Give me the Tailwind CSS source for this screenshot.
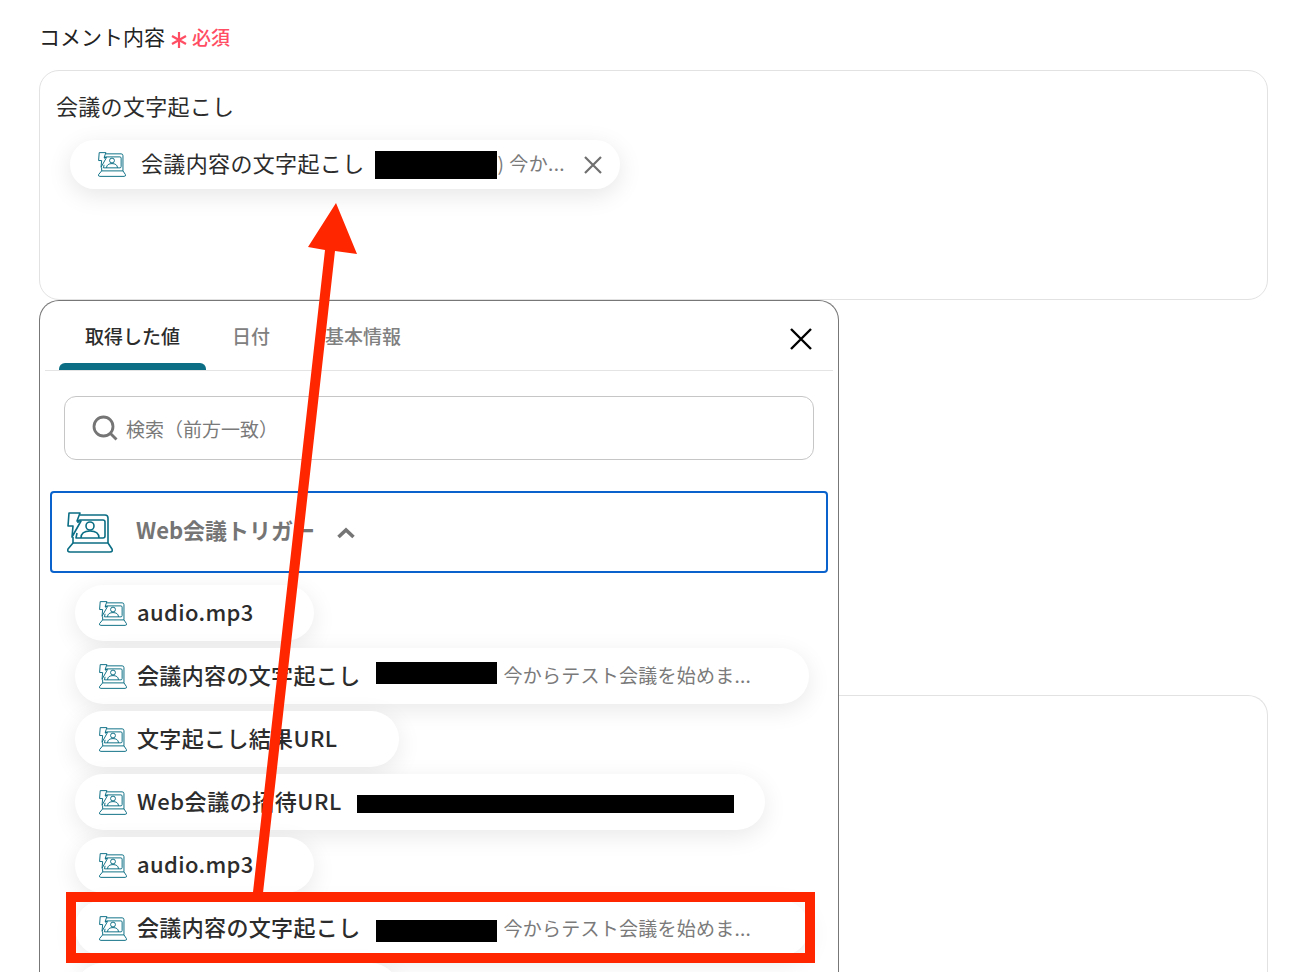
<!DOCTYPE html>
<html lang="ja">
  <head>
    <meta charset="UTF-8" />
    <meta name="viewport" content="width=device-width, initial-scale=1.0" />
    <script src="https://cdn.jsdelivr.net/npm/@tailwindcss/browser@4"></script>
    <title>コメント内容</title>
  </head>
  <body class="relative h-[972px] overflow-hidden bg-white font-['Noto_Sans_CJK_JP','Noto_Sans',sans-serif] text-[#2c2c2c]">
    <svg class="hidden">
      <symbol id="meeting" viewBox="0 0 46 41">
        <g fill="none" stroke="#0b6e84" stroke-width="1.6" stroke-linejoin="round">
          <path d="M2 1h11l-3 8h4L5 25l1-11H1z" />
          <path d="M13 3h25q3 0 3 3v25H6v-6" />
          <path d="M11 11v-1q0-2 2-2h23q2 0 2 2v14q0 2-2 2H9l1-5" />
          <circle cx="23" cy="14" r="4" />
          <path d="M14 26c0-5 4-7 9-7s9 2 9 7" />
          <path d="M6 31 1 37q-1 3 2 3h40q3 0 2-3l-4-6" />
        </g>
      </symbol>
    </svg>

    <div class="px-[39px] pt-[18px]">
      <div class="flex h-[36px] items-center">
        <span class="text-[21px] leading-none text-[#222222]">コメント内容</span>
        <svg class="ml-[6px] mt-[8px] h-[16px] w-[16px]" viewBox="0 0 16 16">
          <path d="M8 0v16M1 4l14 8M15 4 1 12" stroke="#ff4d63" stroke-width="2.2" />
        </svg>
        <span class="ml-[5px] text-[19px] font-medium leading-none text-[#ff4d63]">必須</span>
      </div>

      <div class="mt-[16px] h-[230px] w-[1229px] rounded-[20px] border border-[#e2e2e2] pl-[16px] pt-[18px]">
        <div class="text-[22px] leading-[32px] tracking-[0.3px]">会議の文字起こし</div>
        <div class="ml-[14px] mt-[19px] flex h-[49px] w-[550px] items-center rounded-full bg-white pl-[28px] text-[22px] tracking-[0.35px] shadow-[0_6px_24px_rgba(0,0,0,0.1)]">
          <svg class="h-[25px] w-[28px] shrink-0"><use href="#meeting" /></svg>
          <span class="ml-[15px] whitespace-nowrap pb-[5px] leading-none">会議内容の文字起こし</span>
          <span class="ml-[10px] h-[28px] w-[122px] bg-black"></span>
          <span class="ml-[1px] pb-[2px] text-[19px] text-[#7a7a7a]">)</span>
          <span class="ml-[5px] whitespace-nowrap pb-[2px] text-[19px] text-[#7a7a7a]">今か...</span>
          <svg class="ml-[18px] h-[20px] w-[20px]" viewBox="0 0 20 20">
            <path d="M2 2l16 16M18 2 2 18" stroke="#6f6f6f" stroke-width="2.2" />
          </svg>
        </div>
      </div>

      <div class="mt-[395px] h-[277px] w-[1229px] rounded-t-[20px] border border-b-0 border-[#e2e2e2]"></div>
    </div>

    <div class="absolute left-[39px] top-[300px] h-[672px] w-[800px] overflow-hidden rounded-t-[20px] border border-b-0 border-[#777777] bg-white">
      <div class="mx-[5px] flex h-[70px] items-stretch border-b border-[#e4e4e4] text-[19px] font-medium">
        <div class="ml-[14px] flex w-[147px] flex-col">
          <span class="flex flex-1 items-center justify-center pt-[8px]">取得した値</span>
          <span class="h-[7px] rounded-t-[6px] bg-[#0b6e84]"></span>
        </div>
        <span class="ml-[26px] flex items-center pt-[2px] text-[#808080]">日付</span>
        <span class="ml-[55px] flex items-center pt-[2px] text-[#808080]">基本情報</span>
        <svg class="ml-auto mr-[21px] mt-[27px] h-[22px] w-[22px]" viewBox="0 0 22 22">
          <path d="M1 1l20 20M21 1 1 21" stroke="#000000" stroke-width="2.4" />
        </svg>
      </div>

      <div class="mx-[24px] mt-[25px] flex h-[64px] items-center rounded-[12px] border border-[#c6c6c6] pl-[27px] text-[19px] text-[#7a7a7a]">
        <svg class="h-[26px] w-[26px]" viewBox="0 0 26 26" fill="none" stroke="#757575" stroke-width="2.8">
          <circle cx="11.5" cy="11.5" r="9.5" />
          <path d="M18.5 18.5l6 6" />
        </svg>
        <span class="ml-[8px] pt-[3px]">検索（前方一致）</span>
      </div>

      <div class="mx-[10px] mt-[31px] flex h-[82px] items-center rounded-[4px] border-2 border-[#0a63cc] pl-[15px]">
        <svg class="h-[41px] w-[46px] shrink-0"><use href="#meeting" /></svg>
        <span class="ml-[23px] whitespace-nowrap pb-[5px] text-[22px] font-semibold text-[#757575]">Web会議トリガー</span>
        <svg class="ml-[22px] mt-[2px] h-[12px] w-[18px]" viewBox="0 0 18 12" fill="none" stroke="#757575" stroke-width="3.6">
          <path d="M1.5 10 9 3l7.5 7" />
        </svg>
      </div>

      <div class="ml-[35px] mt-[12px] flex flex-col gap-[7px] text-[22px] font-medium tracking-[0.35px]">
        <div class="flex h-[56px] w-[239px] shrink-0 items-center rounded-full bg-white pl-[24px] shadow-[0_6px_24px_rgba(0,0,0,0.09)]">
          <svg class="h-[25px] w-[28px] shrink-0"><use href="#meeting" /></svg>
          <span class="ml-[10px] pb-[4px]">audio.mp3</span>
        </div>
        <div class="flex h-[56px] w-[734px] shrink-0 items-center rounded-full bg-white pl-[24px] shadow-[0_6px_24px_rgba(0,0,0,0.09)]">
          <svg class="h-[25px] w-[28px] shrink-0"><use href="#meeting" /></svg>
          <span class="ml-[10px] whitespace-nowrap pb-[4px]">会議内容の文字起こし</span>
          <span class="ml-[15px] h-[22px] w-[121px] -translate-y-[3px] bg-black"></span>
          <span class="ml-[7px] whitespace-nowrap pb-[2px] text-[19px] font-normal tracking-[0.25px] text-[#7a7a7a]">今からテスト会議を始めま...</span>
        </div>
        <div class="flex h-[56px] w-[324px] shrink-0 items-center rounded-full bg-white pl-[24px] shadow-[0_6px_24px_rgba(0,0,0,0.09)]">
          <svg class="h-[25px] w-[28px] shrink-0"><use href="#meeting" /></svg>
          <span class="ml-[10px] whitespace-nowrap pb-[4px]">文字起こし結果URL</span>
        </div>
        <div class="flex h-[56px] w-[690px] shrink-0 items-center rounded-full bg-white pl-[24px] shadow-[0_6px_24px_rgba(0,0,0,0.09)]">
          <svg class="h-[25px] w-[28px] shrink-0"><use href="#meeting" /></svg>
          <span class="ml-[10px] whitespace-nowrap pb-[4px] tracking-[0.55px]">Web会議の招待URL</span>
          <span class="ml-[15px] h-[18px] w-[377px] translate-y-[2px] bg-black"></span>
        </div>
        <div class="flex h-[56px] w-[239px] shrink-0 items-center rounded-full bg-white pl-[24px] shadow-[0_6px_24px_rgba(0,0,0,0.09)]">
          <svg class="h-[25px] w-[28px] shrink-0"><use href="#meeting" /></svg>
          <span class="ml-[10px] pb-[4px]">audio.mp3</span>
        </div>
        <div class="flex h-[56px] w-[734px] shrink-0 items-center rounded-full bg-white pl-[24px] shadow-[0_6px_24px_rgba(0,0,0,0.09)]">
          <svg class="h-[25px] w-[28px] shrink-0"><use href="#meeting" /></svg>
          <span class="ml-[10px] whitespace-nowrap pb-[3px]">会議内容の文字起こし</span>
          <span class="ml-[15px] h-[22px] w-[121px] translate-y-[3px] bg-black"></span>
          <span class="ml-[7px] whitespace-nowrap text-[19px] font-normal tracking-[0.25px] text-[#7a7a7a]">今からテスト会議を始めま...</span>
        </div>
        <div class="flex h-[56px] w-[324px] shrink-0 items-center rounded-full bg-white pl-[24px] shadow-[0_6px_24px_rgba(0,0,0,0.09)]"></div>
      </div>
    </div>

    <!-- annotation: red box and arrow -->
    <div class="absolute left-[66px] top-[892px] h-[71px] w-[749px] border-[10px] border-[#ff2600]"></div>
    <svg class="absolute left-0 top-0 h-[972px] w-[1294px]" viewBox="0 0 1294 972">
      <path d="M253 892 325 250 308 247 336 203 357 254 335 251 263 893Z" fill="#ff2600" />
    </svg>
  </body>
</html>
